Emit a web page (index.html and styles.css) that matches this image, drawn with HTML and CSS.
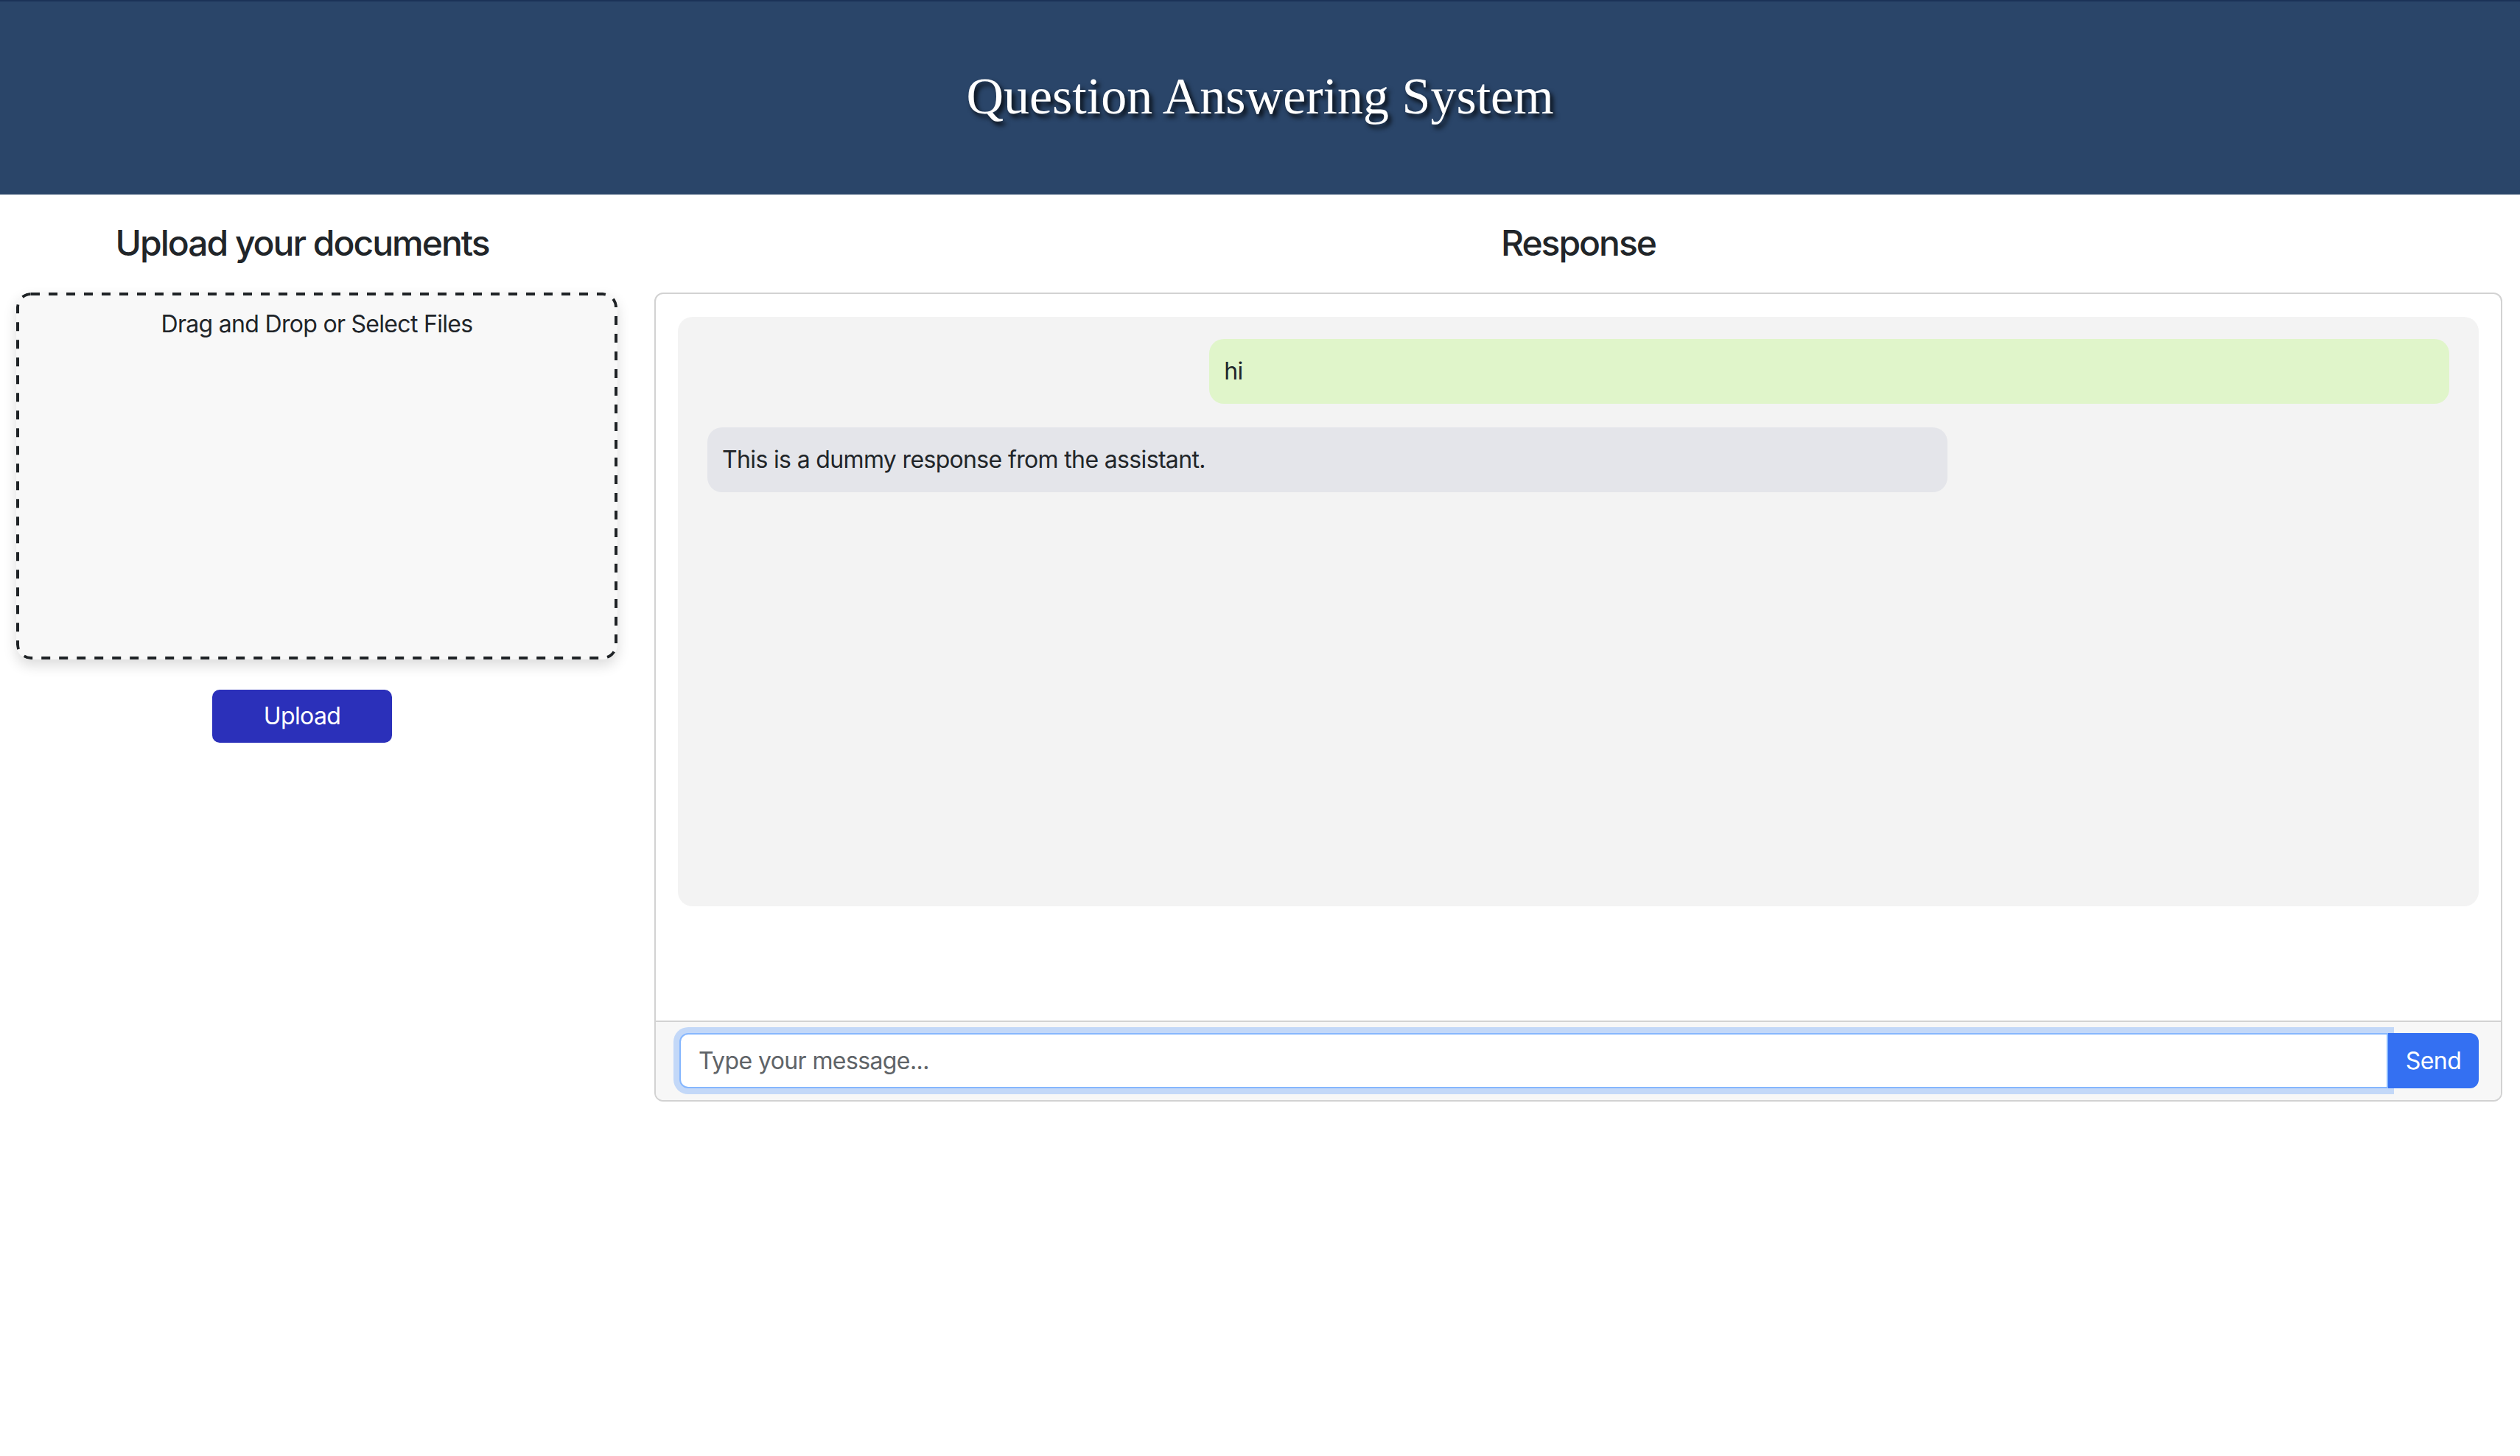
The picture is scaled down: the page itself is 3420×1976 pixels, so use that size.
FILE: index.html
```html
<!DOCTYPE html>
<html lang="en">
<head>
<meta charset="utf-8">
<title>Question Answering System</title>
<link rel="stylesheet" href="styles.css">
</head>
<body>
<header class="topbar">
  <h1 class="title">Question Answering System</h1>
</header>
<main class="main">
  <section class="left">
    <h2 class="heading">Upload your documents</h2>
    <div class="dropzone">
      <p class="drop-text">Drag and Drop or Select Files</p>
    </div>
    <div class="upload-row">
      <button class="upload-btn" type="button">Upload</button>
    </div>
  </section>
  <section class="right">
    <h2 class="heading">Response</h2>
    <div class="card">
      <div class="card-body">
        <div class="chat">
          <div class="bubble user">hi</div>
          <div class="bubble bot">This is a dummy response from the assistant.</div>
        </div>
      </div>
      <div class="card-footer">
        <div class="input-group">
          <input class="msg-input" type="text" placeholder="Type your message...">
          <button class="send-btn" type="button">Send</button>
        </div>
      </div>
    </div>
  </section>
</main>
</body>
</html>
```
FILE: styles.css
```css
* { box-sizing: border-box; }

html, body {
  margin: 0;
  padding: 0;
  background: #ffffff;
}

body {
  font-family: Inter, "Noto Sans", "Liberation Sans", sans-serif;
  color: #212529;
  font-size: 32px;
  line-height: 1.5;
}

.topbar {
  height: 264px;
  background: #2a4569;
  border-top: 2px solid #1b3257;
  display: flex;
  align-items: center;
  justify-content: center;
}

.title {
  margin: 0;
  padding-bottom: 4px;
  font-family: "Liberation Serif", "Times New Roman", serif;
  font-weight: 400;
  font-size: 70px;
  line-height: 1.2;
  color: #ffffff;
  text-shadow: 4px 5px 6px rgba(0, 0, 0, 0.85);
}

.main {
  display: flex;
  align-items: flex-start;
  padding-top: 37px;
}

.left {
  width: 820px;
  flex: none;
}

.right {
  width: 2508px;
  margin-left: 68px;
  flex: none;
}

.heading {
  margin: 0 0 38px;
  text-align: center;
  font-size: 48px;
  font-weight: 500;
  line-height: 57.6px;
  letter-spacing: -2px;
}

.dropzone {
  margin-left: 22px;
  width: 816px;
  height: 498px;
  background-color: #f8f8f8;
  background-image: url("data:image/svg+xml,%3Csvg xmlns='http://www.w3.org/2000/svg' width='816' height='498'%3E%3Crect x='2' y='2' width='812' height='494' rx='18' ry='18' fill='none' stroke='%231f2326' stroke-width='4' stroke-dasharray='12 12'/%3E%3C/svg%3E");
  background-repeat: no-repeat;
  border-radius: 20px;
  box-shadow: 0 8px 18px rgba(0, 0, 0, 0.14);
  padding-top: 19px;
}

.drop-text {
  margin: 0;
  text-align: center;
  letter-spacing: -0.7px;
}

.upload-row {
  display: flex;
  justify-content: center;
  margin-top: 41px;
}

.upload-btn {
  width: 244px;
  height: 72px;
  border: none;
  border-radius: 10px;
  background: #2b30ba;
  color: #ffffff;
  font-family: inherit;
  font-size: 32px;
  letter-spacing: -0.6px;
  padding: 0;
}

.card {
  border: 2px solid #d2d2d2;
  border-radius: 12px;
  background: #ffffff;
  overflow: hidden;
}

.card-body {
  height: 986px;
  padding: 31px 30px;
}

.chat {
  height: 800px;
  background: #f3f3f3;
  border-radius: 20px;
  padding: 30px 40px;
  display: flex;
  flex-direction: column;
  gap: 32px;
}

.bubble {
  width: 71.18%;
  padding: 20px 20px;
  border-radius: 20px;
  line-height: 48px;
  letter-spacing: -0.65px;
}

.bubble.user {
  align-self: flex-end;
  background: #e0f5ca;
}

.bubble.bot {
  align-self: flex-start;
  background: #e4e5ea;
}

.card-footer {
  background: #f7f7f7;
  border-top: 2px solid #d2d2d2;
  padding: 15px 30px 16px 32px;
}

.input-group {
  display: flex;
}

.msg-input {
  flex: 1;
  height: 75px;
  border: 2px solid #86b7fe;
  border-radius: 12px 0 0 12px;
  background: #ffffff;
  padding: 0 24px;
  font-family: inherit;
  font-size: 32px;
  color: #212529;
  letter-spacing: -0.6px;
  box-shadow: 0 0 0 8px rgba(13, 110, 253, 0.22);
  outline: none;
}

.msg-input::placeholder {
  color: #5f6468;
}

.send-btn {
  position: relative;
  width: 123px;
  height: 75px;
  border: none;
  border-radius: 0 12px 12px 0;
  background: #3470f2;
  color: #ffffff;
  font-family: inherit;
  font-size: 32px;
  padding: 0;
  letter-spacing: -0.5px;
}
```
